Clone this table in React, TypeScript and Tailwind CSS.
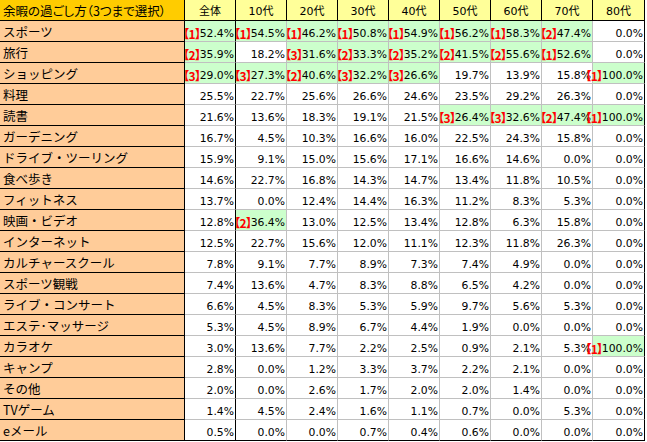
import React from "react";

type Cell = { v: string; r?: number };

const cols = ["全体", "10代", "20代", "30代", "40代", "50代", "60代", "70代", "80代"];

const raw: [string, string][] = [
  ["スポーツ", "1:52.4 1:54.5 1:46.2 1:50.8 1:54.9 1:56.2 1:58.3 2:47.4 0.0"],
  ["旅行", "2:35.9 18.2 3:31.6 2:33.3 2:35.2 2:41.5 2:55.6 1:52.6 0.0"],
  ["ショッピング", "3:29.0 3:27.3 2:40.6 3:32.2 3:26.6 19.7 13.9 15.8 1:100.0"],
  ["料理", "25.5 22.7 25.6 26.6 24.6 23.5 29.2 26.3 0.0"],
  ["読書", "21.6 13.6 18.3 19.1 21.5 3:26.4 3:32.6 2:47.4 1:100.0"],
  ["ガーデニング", "16.7 4.5 10.3 16.6 16.0 22.5 24.3 15.8 0.0"],
  ["ドライブ・ツーリング", "15.9 9.1 15.0 15.6 17.1 16.6 14.6 0.0 0.0"],
  ["食べ歩き", "14.6 22.7 16.8 14.3 14.7 13.4 11.8 10.5 0.0"],
  ["フィットネス", "13.7 0.0 12.4 14.4 16.3 11.2 8.3 5.3 0.0"],
  ["映画・ビデオ", "12.8 2:36.4 13.0 12.5 13.4 12.8 6.3 15.8 0.0"],
  ["インターネット", "12.5 22.7 15.6 12.0 11.1 12.3 11.8 26.3 0.0"],
  ["カルチャースクール", "7.8 9.1 7.7 8.9 7.3 7.4 4.9 0.0 0.0"],
  ["スポーツ観戦", "7.4 13.6 4.7 8.3 8.8 6.5 4.2 0.0 0.0"],
  ["ライブ・コンサート", "6.6 4.5 8.3 5.3 5.9 9.7 5.6 5.3 0.0"],
  ["エステ･マッサージ", "5.3 4.5 8.9 6.7 4.4 1.9 0.0 0.0 0.0"],
  ["カラオケ", "3.0 13.6 7.7 2.2 2.5 0.9 2.1 5.3 1:100.0"],
  ["キャンプ", "2.8 0.0 1.2 3.3 3.7 2.2 2.1 0.0 0.0"],
  ["その他", "2.0 0.0 2.6 1.7 2.0 2.0 1.4 0.0 0.0"],
  ["TVゲーム", "1.4 4.5 2.4 1.6 1.1 0.7 0.0 5.3 0.0"],
  ["eメール", "0.5 0.0 0.0 0.7 0.4 0.6 0.0 0.0 0.0"],
];

const rows = raw.map(([label, s]) => ({
  label,
  cells: s.split(" ").map((t): Cell => {
    if (t.includes(":")) {
      const [r, v] = t.split(":");
      return { v, r: Number(r) };
    }
    return { v: t };
  }),
}));

const jp = "font-['Noto_Sans_CJK_JP','Noto_Sans',sans-serif]";
const num = "font-['DejaVu_Sans','Noto_Sans_CJK_JP',sans-serif]";

export default function App() {
  return (
    <div className="w-[647px] h-[442px] bg-white text-black overflow-hidden">
      <div className="grid grid-cols-[185px_repeat(8,51px)_52px] w-[645px]">
        <div
          className={`h-[21px] bg-[#FFCC00] border-r border-b border-black pl-[3px] flex items-end pb-[2px] text-[12.5px] leading-[14px] whitespace-nowrap ${jp} [font-feature-settings:'palt']`}
        >
          余暇の過ごし方（3つまで選択）
        </div>
        {cols.map((c) => (
          <div
            key={c}
            className={`h-[21px] bg-[#FFFF99] border-r border-b border-black flex items-end justify-center pb-[1px] text-[11px] leading-[14px] ${num}`}
          >
            {c}
          </div>
        ))}
        {rows.map((row, ri) => {
          const last = ri === rows.length - 1;
          return (
            <React.Fragment key={row.label}>
              <div
                className={`h-[21px] bg-[#FFCC99] border-r border-b border-black pl-[3px] flex items-end pb-[2px] text-[12.5px] leading-[14px] whitespace-nowrap ${jp}`}
              >
                {row.label}
              </div>
              {row.cells.map((c, ci) => {
                const rightBlack = ci === 0 || ci === 8;
                return (
                  <div
                    key={ci}
                    className={`h-[21px] border-r border-b flex items-end justify-end pr-px whitespace-nowrap text-[10.8px] leading-[14px] ${num} ${
                      rightBlack ? "border-r-black" : "border-r-[#C0C0C0]"
                    } ${last ? "border-b-black" : "border-b-[#C0C0C0]"} ${
                      c.r ? "bg-[#CCFFCC]" : "bg-white"
                    }`}
                  >
                    {c.r ? (
                      <span
                        className={`text-[#FF0000] ${jp} text-[12px] font-bold [font-feature-settings:'halt'] tracking-[-1px]`}
                      >
                        【{c.r}】
                      </span>
                    ) : null}
                    <span>{c.v}%</span>
                  </div>
                );
              })}
            </React.Fragment>
          );
        })}
      </div>
    </div>
  );
}
